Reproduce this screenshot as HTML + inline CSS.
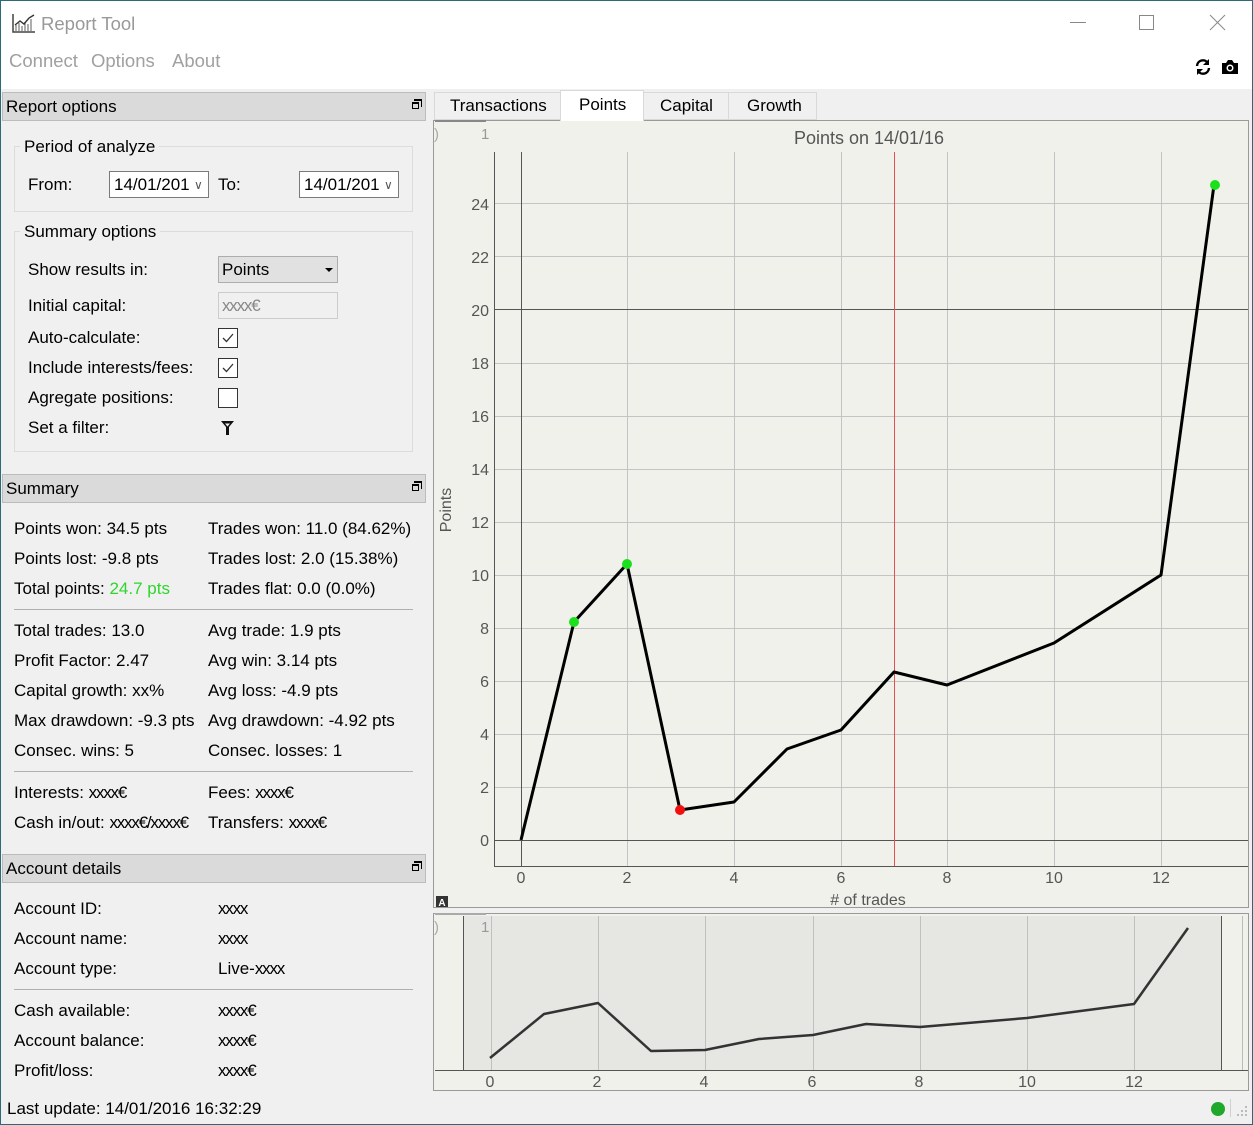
<!DOCTYPE html>
<html><head><meta charset="utf-8"><style>
*{margin:0;padding:0;box-sizing:border-box}
body{width:1253px;height:1125px;overflow:hidden;background:#f0f0f0;font-family:"Liberation Sans",sans-serif;font-size:17px;color:#000;position:relative}
.t{position:absolute;white-space:nowrap;line-height:20px}
.x{letter-spacing:-1.2px}
.hdr{position:absolute;left:2px;width:424px;height:29px;background:#dadada;border:1px solid #bcbcbc}
.hdr span{position:absolute;left:3px;top:4px}
.hdr i{position:absolute;right:6px;top:9px;width:7px;height:7px;border:1px solid #000;border-top-width:2px}
.hdr i:before{content:"";position:absolute;left:1px;top:-5px;width:7px;height:6px;border:1px solid #000;border-top-width:2px;border-left:none;border-bottom:none}
.sep{position:absolute;left:14px;width:399px;height:1px;background:#b0b0b0}
.gb{position:absolute;border:1px solid #dcdcdc}
.cb{position:absolute;left:218px;width:20px;height:20px;border:1px solid #333;background:#fff}
</style></head><body>
<div style="position:absolute;left:0;top:0;width:1253px;height:89px;background:#fff"></div>
<div style="position:absolute;left:0;top:0;width:1253px;height:1125px;border:1px solid #2b6a78;pointer-events:none;z-index:9"></div>
<svg style="position:absolute;left:12px;top:12px" width="24" height="22" viewBox="0 0 24 22"><path d="M1 2V20H23" stroke="#444" stroke-width="1.5" fill="none"/><path d="M4 19V13M7 19V11M10 19V14M13 19V10M16 19V12M19 19V7" stroke="#777" stroke-width="1.2"/><path d="M3 13L8 9L12 12L17 6L22 3" stroke="#333" stroke-width="1.4" fill="none"/></svg>
<div class="t" style="left:41px;top:14px;font-size:18.5px;color:#999">Report Tool</div>
<div class="t" style="left:9px;top:51px;font-size:18.5px;color:#a0a0a0">Connect</div>
<div class="t" style="left:91px;top:51px;font-size:18.5px;color:#a0a0a0">Options</div>
<div class="t" style="left:172px;top:51px;font-size:18.5px;color:#a0a0a0">About</div>
<div style="position:absolute;left:1070px;top:22px;width:16px;height:1px;background:#888"></div>
<div style="position:absolute;left:1139px;top:15px;width:15px;height:15px;border:1px solid #888"></div>
<svg style="position:absolute;left:1209px;top:14px" width="17" height="17"><path d="M1 1L16 16M16 1L1 16" stroke="#888" stroke-width="1"/></svg>
<svg style="position:absolute;left:1194px;top:58px" width="18" height="18" viewBox="0 0 18 18"><path d="M3 8A6 6 0 0 1 14 5" stroke="#000" stroke-width="2.4" fill="none"/><path d="M15 1V7H9Z" fill="#000"/><path d="M15 10A6 6 0 0 1 4 13" stroke="#000" stroke-width="2.4" fill="none"/><path d="M3 17V11H9Z" fill="#000"/></svg>
<svg style="position:absolute;left:1221px;top:59px" width="18" height="16" viewBox="0 0 18 16"><path d="M1 4H5L7 1H11L13 4H17V15H1Z" fill="#000"/><circle cx="9" cy="9" r="3.5" fill="#fff"/><circle cx="9" cy="9" r="2" fill="#000"/></svg>

<!-- left panel -->
<div class="hdr" style="top:92px"><span>Report options</span><i></i></div>
<div class="gb" style="left:14px;top:146px;width:399px;height:66px"></div>
<div class="t" style="left:20px;top:137px;background:#f0f0f0;padding:0 4px">Period of analyze</div>
<div class="t" style="left:28px;top:175px">From:</div>
<div style="position:absolute;left:109px;top:171px;width:100px;height:27px;border:1px solid #7a7a7a;background:#fff"><span class="t" style="left:4px;top:3px">14/01/201</span><span class="t" style="left:84px;top:3px;font-size:12px;color:#555">&#8744;</span></div>
<div class="t" style="left:218px;top:175px">To:</div>
<div style="position:absolute;left:299px;top:171px;width:100px;height:27px;border:1px solid #7a7a7a;background:#fff"><span class="t" style="left:4px;top:3px">14/01/201</span><span class="t" style="left:84px;top:3px;font-size:12px;color:#555">&#8744;</span></div>
<div class="gb" style="left:14px;top:231px;width:399px;height:221px"></div>
<div class="t" style="left:20px;top:222px;background:#f0f0f0;padding:0 4px">Summary options</div>
<div class="t" style="left:28px;top:260px">Show results in:</div>
<div style="position:absolute;left:218px;top:256px;width:120px;height:27px;border:1px solid #adadad;background:#e1e1e1"><span class="t" style="left:3px;top:3px">Points</span><span style="position:absolute;left:106px;top:11px;border:4px solid transparent;border-top:4px solid #000"></span></div>
<div class="t" style="left:28px;top:296px">Initial capital:</div>
<div style="position:absolute;left:218px;top:292px;width:120px;height:27px;border:1px solid #ccc;background:#f0f0f0"><span class="t x" style="left:3px;top:3px;color:#888">xxxx€</span></div>
<div class="t" style="left:28px;top:328px">Auto-calculate:</div>
<div class="cb" style="top:328px"><svg width="18" height="18"><path d="M4 9L7.5 12.5L14 5" stroke="#333" stroke-width="1.3" fill="none"/></svg></div>
<div class="t" style="left:28px;top:358px">Include interests/fees:</div>
<div class="cb" style="top:358px"><svg width="18" height="18"><path d="M4 9L7.5 12.5L14 5" stroke="#333" stroke-width="1.3" fill="none"/></svg></div>
<div class="t" style="left:28px;top:388px">Agregate positions:</div>
<div class="cb" style="top:388px"></div>
<div class="t" style="left:28px;top:418px">Set a filter:</div>
<svg style="position:absolute;left:220px;top:420px" width="15" height="16"><path d="M1 1H14L9 7V15H6V7Z" fill="#111"/><path d="M5 3.5H10L7.5 6.5Z" fill="#f0f0f0"/></svg>

<div class="hdr" style="top:474px"><span>Summary</span><i></i></div>
<div class="t" style="left:14px;top:519px">Points won: 34.5 pts</div><div class="t" style="left:208px;top:519px">Trades won: 11.0 (84.62%)</div>
<div class="t" style="left:14px;top:549px">Points lost: -9.8 pts</div><div class="t" style="left:208px;top:549px">Trades lost: 2.0 (15.38%)</div>
<div class="t" style="left:14px;top:579px">Total points: <span style="color:#2ed52e">24.7 pts</span></div><div class="t" style="left:208px;top:579px">Trades flat: 0.0 (0.0%)</div>
<div class="sep" style="top:609px"></div>
<div class="t" style="left:14px;top:621px">Total trades: 13.0</div><div class="t" style="left:208px;top:621px">Avg trade: 1.9 pts</div>
<div class="t" style="left:14px;top:651px">Profit Factor: 2.47</div><div class="t" style="left:208px;top:651px">Avg win: 3.14 pts</div>
<div class="t" style="left:14px;top:681px">Capital growth: xx%</div><div class="t" style="left:208px;top:681px">Avg loss: -4.9 pts</div>
<div class="t" style="left:14px;top:711px">Max drawdown: -9.3 pts</div><div class="t" style="left:208px;top:711px">Avg drawdown: -4.92 pts</div>
<div class="t" style="left:14px;top:741px">Consec. wins: 5</div><div class="t" style="left:208px;top:741px">Consec. losses: 1</div>
<div class="sep" style="top:771px"></div>
<div class="t" style="left:14px;top:783px">Interests: <span class="x">xxxx€</span></div><div class="t" style="left:208px;top:783px">Fees: <span class="x">xxxx€</span></div>
<div class="t" style="left:14px;top:813px">Cash in/out: <span class="x">xxxx€/xxxx€</span></div><div class="t" style="left:208px;top:813px">Transfers: <span class="x">xxxx€</span></div>

<div class="hdr" style="top:854px"><span>Account details</span><i></i></div>
<div class="t" style="left:14px;top:899px">Account ID:</div><div class="t x" style="left:218px;top:899px">xxxx</div>
<div class="t" style="left:14px;top:929px">Account name:</div><div class="t x" style="left:218px;top:929px">xxxx</div>
<div class="t" style="left:14px;top:959px">Account type:</div><div class="t" style="left:218px;top:959px">Live-<span class="x">xxxx</span></div>
<div class="sep" style="top:989px"></div>
<div class="t" style="left:14px;top:1001px">Cash available:</div><div class="t x" style="left:218px;top:1001px">xxxx€</div>
<div class="t" style="left:14px;top:1031px">Account balance:</div><div class="t x" style="left:218px;top:1031px">xxxx€</div>
<div class="t" style="left:14px;top:1061px">Profit/loss:</div><div class="t x" style="left:218px;top:1061px">xxxx€</div>
<div class="t" style="left:7px;top:1099px">Last update: 14/01/2016 16:32:29</div>
<div style="position:absolute;left:1211px;top:1102px;width:14px;height:14px;border-radius:50%;background:#1fa82b"></div>
<div style="position:absolute;left:1230px;top:1099px;width:1px;height:18px;background:#d0d0d0"></div>

<!-- tabs -->
<div style="position:absolute;left:434px;top:92px;width:127px;height:28px;border:1px solid #d9d9d9;background:#f0f0f0"><span class="t" style="left:15px;top:3px">Transactions</span></div>
<div style="position:absolute;left:560px;top:90px;width:84px;height:31px;border:1px solid #d9d9d9;border-bottom:none;background:#fff;z-index:2"><span class="t" style="left:18px;top:4px">Points</span></div>
<div style="position:absolute;left:643px;top:92px;width:86px;height:28px;border:1px solid #d9d9d9;background:#f0f0f0"><span class="t" style="left:16px;top:3px">Capital</span></div>
<div style="position:absolute;left:728px;top:92px;width:89px;height:28px;border:1px solid #d9d9d9;background:#f0f0f0"><span class="t" style="left:18px;top:3px">Growth</span></div>

<svg style="position:absolute;left:0;top:0" width="1253" height="1125" viewBox="0 0 1253 1125" font-family="Liberation Sans, sans-serif">
<rect x="433.5" y="120.5" width="815" height="787" fill="#f1f1ec" stroke="#9a9a9a"/>
<rect x="433.5" y="913.5" width="815" height="177" fill="#f1f1ec" stroke="#9a9a9a"/>
<path d="M435 121H486" stroke="#888" stroke-width="2"/>
<text x="434" y="139" font-size="15" fill="#aaa">)</text><text x="481" y="139" font-size="15" fill="#999">1</text>
<text x="869" y="144" font-size="18" fill="#555" text-anchor="middle">Points on 14/01/16</text>
<g stroke="#c4c4c4" stroke-width="1">
<path d="M627.5 152V866M734.5 152V866M841.5 152V866M947.5 152V866M1054.5 152V866M1161.5 152V866"/>
<path d="M494 787.5H1248M494 734.5H1248M494 681.5H1248M494 628.5H1248M494 575.5H1248M494 522.5H1248M494 469.5H1248M494 416.5H1248M494 363.5H1248M494 256.5H1248M494 203.5H1248"/>
</g>
<path d="M494.5 152V866.5H1248M521.5 152V866M494 309.5H1248M494 840.5H1248" stroke="#555" stroke-width="1" fill="none"/>
<path d="M894.5 152V866" stroke="#e85050" stroke-width="1"/>
<g font-size="16" fill="#555" text-anchor="end">
<text x="489" y="846">0</text><text x="489" y="793">2</text><text x="489" y="740">4</text><text x="489" y="687">6</text><text x="489" y="634">8</text><text x="489" y="581">10</text><text x="489" y="528">12</text><text x="489" y="475">14</text><text x="489" y="422">16</text><text x="489" y="369">18</text><text x="489" y="316">20</text><text x="489" y="263">22</text><text x="489" y="210">24</text>
</g>
<g font-size="16" fill="#555" text-anchor="middle">
<text x="521" y="883">0</text><text x="627" y="883">2</text><text x="734" y="883">4</text><text x="841" y="883">6</text><text x="947" y="883">8</text><text x="1054" y="883">10</text><text x="1161" y="883">12</text>
<text x="868" y="905">#  of trades</text>
</g>
<text transform="translate(451,510) rotate(-90)" font-size="16" fill="#555" text-anchor="middle">Points</text>
<rect x="436" y="896" width="12" height="11" fill="#333"/><text x="442" y="906" font-size="10" fill="#fff" text-anchor="middle" font-weight="bold">A</text>
<polyline points="521,840 574,622 627,564 680,810 734,802 787,749 841,730 894,672 947,685 1054,643 1161,575 1214,185" fill="none" stroke="#000" stroke-width="3" stroke-linejoin="round"/>
<circle cx="574" cy="622" r="5" fill="#1de01d"/><circle cx="627" cy="564" r="5" fill="#1de01d"/><circle cx="1215" cy="185" r="5" fill="#1de01d"/><circle cx="680" cy="810" r="5" fill="#f01010"/>
<rect x="463" y="916" width="759" height="154" fill="#e6e6e2"/>
<path d="M463.5 916V1070M1221.5 916V1070M435 1070.5H1248" stroke="#555"/>
<path d="M1242.5 916V1070" stroke="#bbb"/>
<g stroke="#c0c0c0"><path d="M491.5 916V1070M598.5 916V1070M705.5 916V1070M813.5 916V1070M920.5 916V1070M1027.5 916V1070M1134.5 916V1070"/></g>
<path d="M435 914H486" stroke="#aaa" stroke-width="2"/>
<text x="434" y="932" font-size="15" fill="#aaa">)</text><text x="481" y="932" font-size="15" fill="#999">1</text>
<g font-size="16" fill="#555" text-anchor="middle">
<text x="490" y="1087">0</text><text x="597" y="1087">2</text><text x="704" y="1087">4</text><text x="812" y="1087">6</text><text x="919" y="1087">8</text><text x="1027" y="1087">10</text><text x="1134" y="1087">12</text>
</g>
<polyline points="490,1058 544,1014 598,1003 651,1051 705,1050 759,1039 813,1035 866,1024 920,1027 1027,1018 1134,1004 1188,928" fill="none" stroke="#333" stroke-width="2.5" stroke-linejoin="round"/>
<g fill="#bbb"><rect x="1245" y="1114" width="2" height="2"/><rect x="1241" y="1114" width="2" height="2"/><rect x="1237" y="1114" width="2" height="2"/><rect x="1245" y="1110" width="2" height="2"/><rect x="1241" y="1110" width="2" height="2"/><rect x="1245" y="1106" width="2" height="2"/></g>
</svg>
</body></html>
